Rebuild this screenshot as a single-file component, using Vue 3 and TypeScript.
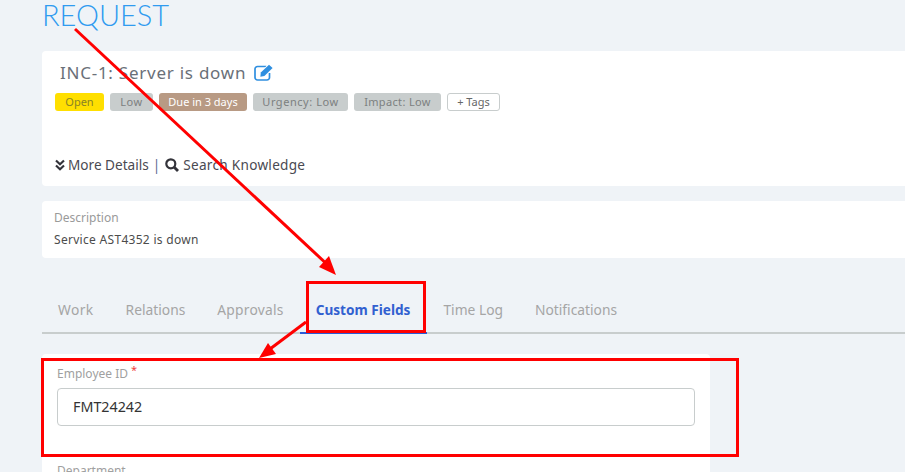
<script setup lang="ts">
const tags = [
  { text: 'Open', cls: 'yellow w-open' },
  { text: 'Low', cls: 'grey w-low' },
  { text: 'Due in 3 days', cls: 'brown w-due' },
  { text: 'Urgency: Low', cls: 'grey w-urgency' },
  { text: 'Impact: Low', cls: 'grey w-impact' },
]
const tabs = ['Work', 'Relations', 'Approvals', 'Custom Fields', 'Time Log', 'Notifications']
</script>

<template>
  <div class="page">
    <h1 class="title">REQUEST</h1>

    <section class="card head">
      <div class="subject">
        <span>INC-1: Server is down</span>
        <svg class="edit" width="20" height="17" viewBox="0 0 20 17">
          <path d="M12.500 2.500H3.500A2.500 2.500 0 0 0 1 5v8.500A2.500 2.500 0 0 0 3.500 16h9.500a2.500 2.500 0 0 0 2.500-2.500V9" fill="none" stroke="#2f8fe0" stroke-width="1.700" />
          <path d="M7.500 11.500 16.500 2.500" stroke="#fff" stroke-width="6.500" />
          <path d="M6.800 8.600 15 .7l3.600 3.400-8.200 8-4 .7z" fill="#2f8fe0" />
        </svg>
      </div>
      <div class="tags">
        <span v-for="t in tags" :key="t.text" class="tag" :class="t.cls">{{ t.text }}</span>
        <span class="tag add">+ Tags</span>
      </div>
      <div class="links">
        <svg width="10" height="12" viewBox="0 0 10 12">
          <path d="M1 1.500 5 5.200 9 1.500M1 6.500 5 10.200 9 6.500" fill="none" stroke="#33333a" stroke-width="2.200" />
        </svg>
        <span class="more">More Details</span>
        <span class="sep">|</span>
        <svg width="14" height="14" viewBox="0 0 14 14">
          <circle cx="5.800" cy="5.800" r="4.500" fill="none" stroke="#33333a" stroke-width="2.200" />
          <path d="M9 9 13 13" stroke="#33333a" stroke-width="2.800" />
        </svg>
        <span class="search">Search Knowledge</span>
      </div>
    </section>

    <section class="card desc">
      <div class="desc-label">Description</div>
      <div class="desc-text">Service AST4352 is down</div>
    </section>

    <nav class="tabs">
      <span v-for="t in tabs" :key="t" class="tab" :class="{ active: t === 'Custom Fields' }">{{ t }}</span>
    </nav>

    <section class="card form">
      <label class="field-label">Employee ID<span class="req">*</span></label>
      <div class="input">FMT24242</div>
      <label class="field-label next">Department</label>
    </section>

    <svg class="annot" width="905" height="472" viewBox="0 0 905 472">
      <g fill="none" stroke="#ff0000" stroke-width="3">
        <rect x="307.500" y="282.500" width="117" height="49" />
        <rect x="42.500" y="359.500" width="695" height="96" />
        <path d="M75 29 331 268" />
        <path d="M306 322 266 352" />
      </g>
      <path d="M336 275 319 267 329 256z" fill="#ff0000" />
      <path d="M259 358 268 343 276 354z" fill="#ff0000" />
    </svg>
  </div>
</template>

<style>
html, body { margin: 0; overflow: hidden; background: #eff3f7; }
</style>

<style scoped>
.page {
  position: relative;
  width: 905px;
  height: 472px;
  overflow: hidden;
  background: #eff3f7;
  padding-left: 42px;
  box-sizing: border-box;
  font-family: "Noto Sans", "Open Sans", sans-serif;
  color: #444;
}
.title {
  margin: 0;
  height: 51px;
  font-family: Lato, sans-serif;
  font-weight: 300;
  font-size: 29px;
  line-height: 29px;
  color: #2f9bf0;
}
.card {
  background: #fff;
  border-radius: 4px;
  box-sizing: border-box;
}
.head {
  width: 880px;
  height: 135px;
  padding: 9px 13px 0;
  display: flex;
  flex-direction: column;
}
.subject {
  display: flex;
  align-items: center;
  gap: 8px;
  padding-left: 5px;
  height: 24px;
  font-size: 17px;
  letter-spacing: 0.75px;
  color: #6a7078;
}
.tags {
  display: flex;
  gap: 6px;
  margin-top: 9px;
}
.tag {
  height: 18px;
  line-height: 18px;
  border-radius: 3px;
  font-size: 11px;
  box-sizing: border-box;
  white-space: nowrap;
  text-align: center;
}
.w-open { width: 49px; }
.w-low { width: 43px; letter-spacing: 0.5px; }
.w-due { width: 88px; }
.w-urgency { width: 95px; letter-spacing: 0.55px; }
.w-impact { width: 87px; letter-spacing: 0.35px; }
.yellow { background: #ffdf00; color: #8a8326; }
.grey { background: #c8cdcd; color: #7c8080; }
.brown { background: #b89a84; color: #fff; }
.add {
  width: 53px;
  background: #fff;
  border: 1px solid #c8cdcd;
  line-height: 16px;
  color: #666;
}
.links {
  display: flex;
  align-items: center;
  margin-top: 44px;
  font-size: 13.600px;
  color: #4a4a52;
}
.more { margin-left: 3px; }
.sep { margin: 0 5px 0 4px; color: #5a6a90; }
.search { margin-left: 4px; letter-spacing: 0.28px; }
.desc {
  width: 880px;
  height: 57px;
  margin-top: 15px;
  padding: 9px 12px 0;
}
.desc-label { font-size: 12px; line-height: 15px; color: #9a9a9a; }
.desc-text { margin-top: 7px; font-size: 12px; letter-spacing: 0.3px; line-height: 15px; color: #4c4c4c; }
.tabs {
  display: flex;
  width: 863px;
  height: 76px;
  box-sizing: border-box;
  border-bottom: 2px solid #c8cdcd;
  align-items: flex-end;
}
.tab {
  height: 44px;
  line-height: 40px;
  margin-bottom: -2px;
  padding: 0 16px;
  font-size: 13.800px;
  color: #a5a5a5;
  box-sizing: border-box;
  white-space: nowrap;
}
.tab:nth-child(1) { letter-spacing: 0.4px; }
.tab:nth-child(3) { letter-spacing: 0.25px; }
.tab.active {
  color: #3160d0;
  font-size: 13.600px;
  font-weight: 700;
  padding-right: 17px;
  border-bottom: 2px solid #2a5bd7;
}
.form {
  width: 668px;
  height: 140px;
  margin-top: 20px;
  padding: 12px 15px 0;
  border-radius: 4px 4px 0 0;
}
.field-label {
  display: block;
  font-size: 12px;
  line-height: 16px;
  color: #a0a0a0;
}
.req {
  position: relative;
  top: -4px;
  margin-left: 3px;
  color: #f04040;
  font-size: 11px;
}
.input {
  height: 38px;
  margin-top: 6px;
  border: 1px solid #c8cdcd;
  border-radius: 4px;
  box-sizing: border-box;
  padding-left: 15px;
  line-height: 36px;
  font-size: 14.300px;
  color: #333;
}
.next { margin-top: 37px; }
.annot {
  position: absolute;
  left: 0;
  top: 0;
  pointer-events: none;
}
</style>
